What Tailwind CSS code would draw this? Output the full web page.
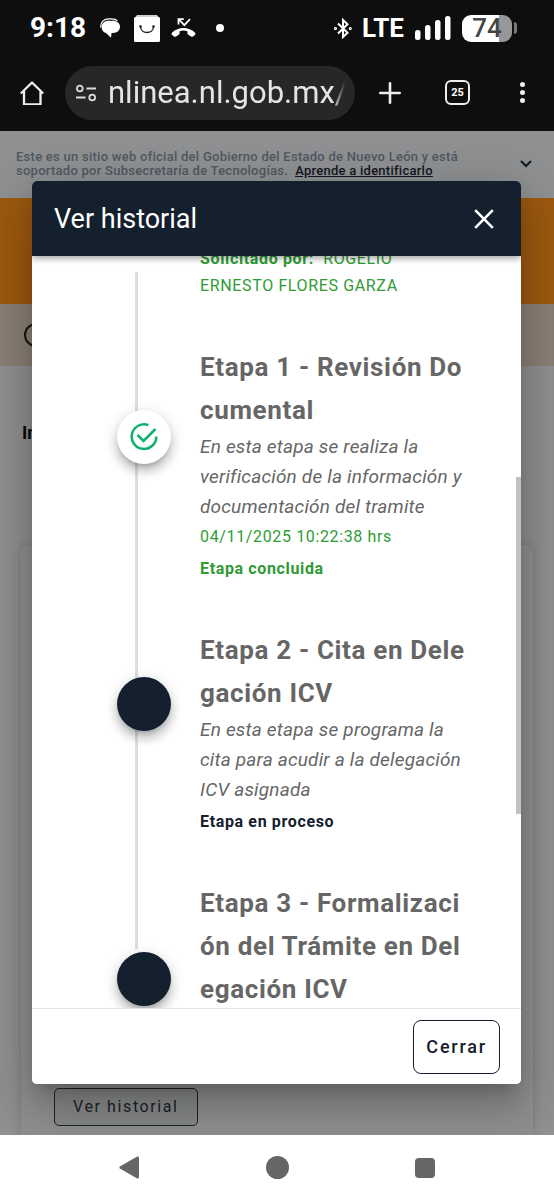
<!DOCTYPE html>
<html lang="es">
<head>
<meta charset="utf-8">
<meta name="viewport" content="width=device-width, initial-scale=1">
<title>Ver historial</title>
<script src="https://cdn.jsdelivr.net/npm/@tailwindcss/browser@4"></script>
</head>
<body class="flex min-h-screen flex-col bg-white font-['Roboto',sans-serif]">

<header class="bg-[#0e0e0e] text-white">
  <div class="flex h-14 items-center justify-between pr-[37px] pl-[30px]">
    <div class="flex items-center">
      <span class="w-[56px] text-[28px] leading-8 font-bold">9:18</span>
      <svg class="ml-3.5 h-5 w-5" viewBox="0 0 20 20" fill="#fff" aria-hidden="true"><path d="M.8 9.500C.2 4 4 .8 9 .8h2c3 0 5 .6 6.500 2" fill="none" stroke="#fff" stroke-width="1.200"/><path d="M8.500 2.800h4.300c4.200 0 7.200 2.500 7.200 6 0 3.700-3 6.200-7 6.200h-1.500L11 19.800 6 15C3 14.300 1.600 11.800 1.600 9c0-3.700 3-6.200 6.900-6.200z"/></svg>
      <svg class="ml-3.5 h-[27px] w-[26px]" viewBox="0 0 26 27" aria-hidden="true"><path d="M3 0h20l3 4H0z" fill="#d8cfcf"/><rect y="2" width="26" height="25" rx="1.500" fill="#fff"/><path d="M6.500 11.500c0 8 13 8 13 0" fill="none" stroke="#222" stroke-width="1.400"/><circle cx="6.500" cy="11.500" r="1.300" fill="#222"/><circle cx="19.500" cy="11.500" r="1.300" fill="#222"/></svg>
      <svg class="ml-[11px] h-5 w-[25px]" viewBox="0 0 25 20" aria-hidden="true"><path d="M1.200 14.500C7 8.500 18 8.500 23.800 14.500c.9 1 .9 1.700 0 2.500l-1.700 1.400c-.7.500-1.400.5-2.100 0l-2.700-1.700c-.7-.5-.9-1-.9-1.700v-1.800c-2.700-.9-5-.9-7.800 0V15c0 .7-.3 1.200-.9 1.700L5 18.400c-.7.500-1.400.5-2.100 0L1.200 17c-.9-.8-.9-1.500 0-2.500z" fill="#fff"/><path d="M7.500 6.500V1.200h5.300M8 1.500l5.300 5.700L19 1.200" fill="none" stroke="#fff" stroke-width="1.800"/></svg>
      <span class="ml-5 size-2 rounded-full bg-white"></span>
    </div>
    <div class="flex items-center">
      <svg class="h-[21px] w-[18px]" viewBox="0 0 18 21" fill="none" stroke="#fff" stroke-width="2" aria-hidden="true"><path d="M4 5.500l9.500 9.300L9 19V2l4.500 4.200L4 15.500"/><circle cx="1.500" cy="10.500" r=".6"/><circle cx="16.300" cy="10.500" r=".6"/></svg>
      <span class="ml-2.5 text-[26px] leading-8 font-bold">LTE</span>
      <svg class="ml-[11px] h-6 w-[36px]" viewBox="0 0 36 24" fill="#fff" aria-hidden="true"><rect x="0" y="14" width="5.500" height="10" rx="2.500"/><rect x="10" y="9" width="5.500" height="15" rx="2.500"/><rect x="20" y="4" width="5.500" height="20" rx="2.500"/><rect x="30" y="0" width="5.500" height="24" rx="2.500"/></svg>
      <div class="ml-[11px] flex h-[27px] w-[50px] items-center justify-center rounded-[9px] bg-linear-to-r from-white from-75% to-[#979797] to-75% text-[26px] leading-none font-medium text-[#444]">74</div>
      <span class="ml-0.5 h-3 w-[3px] rounded-r bg-[#777]"></span>
    </div>
  </div>
  <div class="flex h-[75px] items-center pr-7 pl-5 pb-0.5">
    <button aria-label="Inicio" class="w-[45px]"><svg class="size-6" viewBox="0 0 24 24" fill="none" stroke="#eee" stroke-width="2.300" stroke-linejoin="round" aria-hidden="true"><path d="M.8 12.500L12 1.500l11.200 11M4 10v13.500h16.500V10"/></svg></button>
    <div class="flex h-[54px] min-w-0 flex-1 items-center overflow-hidden rounded-full bg-[#262729] pr-2.5 pl-[11px]">
      <svg class="h-[18px] w-5 shrink-0" viewBox="0 0 20 18" fill="none" stroke="#ddd" stroke-width="1.800" aria-hidden="true"><circle cx="3.800" cy="4.500" r="2.900"/><path d="M10.500 4.500H20M0 13.500h9.500"/><circle cx="16.200" cy="13.500" r="2.900"/></svg>
      <input aria-label="Dirección" value="nlinea.nl.gob.mx/" readonly class="ml-3 w-full min-w-0 bg-transparent mask-r-from-95% text-[31px] leading-10 text-[#e4e4e6] outline-none">
    </div>
    <button aria-label="Nueva pestaña" class="ml-6 shrink-0"><svg class="size-[22px]" viewBox="0 0 22 22" stroke="#eee" stroke-width="2.600" stroke-linecap="round" aria-hidden="true"><path d="M11 1.300v19.400M1.300 11h19.400"/></svg></button>
    <button aria-label="Pestañas" class="ml-11 flex size-[25px] shrink-0 items-center justify-center rounded-[6px] border-2 border-[#eee] text-[11px] leading-none font-bold">25</button>
    <button aria-label="Menú" class="ml-12 flex w-2 shrink-0 flex-col items-center gap-[3px]"><i class="size-[5px] rounded-full bg-[#eee]"></i><i class="size-[5px] rounded-full bg-[#eee]"></i><i class="size-[5px] rounded-full bg-[#eee]"></i></button>
  </div>
</header>

<main class="relative flex flex-1 flex-col overflow-hidden bg-[#8f8f8f]">
  <div class="flex h-[67px] items-start justify-between bg-[#8f9092] px-4 pt-[19px]">
    <p class="text-[13px] leading-[14px] font-medium tracking-[0.02em] text-[#515761]">Este es un sitio web oficial del Gobierno del Estado de Nuevo León y está<br>soportado por Subsecretaría de Tecnologías. &nbsp;<a href="#" class="text-[#14181e] underline">Aprende a identificarlo</a></p>
    <button aria-label="Desplegar" class="mt-2.5 mr-1.5 shrink-0"><svg class="h-2 w-3" viewBox="0 0 12 8" fill="none" stroke="#14181e" stroke-width="2" aria-hidden="true"><path d="M1 1l5 5 5-5"/></svg></button>
  </div>
  <div class="h-[106px] bg-[#9d5910]"></div>
  <div class="flex h-[62px] items-center bg-[#8a7f74] px-6"><span class="size-6 rounded-full border-2 border-[#161616]"></span></div>
  <h2 class="mt-[55px] px-[22px] text-lg leading-6 font-bold text-[#080808]">Información</h2>
  <div class="mx-[21px] mt-[100px] flex flex-1 items-end rounded-t-lg bg-[#8f8f8f] px-[33px] pb-[9px] shadow-[0_0_8px_rgba(0,0,0,0.15)]">
    <button class="h-[38px] rounded-[5px] border border-[#1b2129] bg-[#868887] px-[18px] text-base tracking-widest text-[#1b2129]">Ver historial</button>
  </div>

  <section role="dialog" aria-label="Ver historial" class="absolute top-[50px] right-[33px] bottom-[51px] left-8 flex flex-col overflow-hidden rounded-[5px] bg-white shadow-[0_11px_15px_-7px_rgba(0,0,0,0.2),0_24px_38px_3px_rgba(0,0,0,0.14),0_9px_46px_8px_rgba(0,0,0,0.12)]">
    <div class="z-10 flex h-[75px] shrink-0 items-center justify-between bg-[#14202e] pr-[27px] pl-[22px] text-white shadow-[0_2px_7px_rgba(0,0,0,0.4)]">
      <h1 class="text-[27px] leading-8">Ver historial</h1>
      <button aria-label="Cerrar ventana"><svg class="size-5" viewBox="0 0 20 20" stroke="#fff" stroke-width="2.600" aria-hidden="true"><path d="M1.200 1.200l17.600 17.600M18.800 1.200L1.200 18.800"/></svg></button>
    </div>

    <div class="relative min-h-0 flex-1 overflow-hidden pr-[50px] pl-[85px]">
      <div class="absolute top-4 bottom-[59px] left-[103px] w-[3px] bg-[#dedede]"></div>
      <div class="absolute top-[221px] right-0 h-[337px] w-[5px] bg-[#c1c1c1]"></div>
      <p class="-mt-[11px] pl-[83px] text-base leading-[27px] tracking-[0.04em] text-[#2e9b35]"><strong class="font-bold">Solicitado por:</strong> &nbsp;ROGELIO<br>ERNESTO FLORES GARZA</p>
      <ol class="relative mt-[47px] flex flex-col gap-11">
        <li class="flex gap-[29px]">
          <span class="mt-16 flex size-[54px] shrink-0 items-center justify-center rounded-full bg-white shadow-[0_5px_5px_-3px_rgba(0,0,0,0.2),0_8px_10px_1px_rgba(0,0,0,0.14),0_3px_14px_2px_rgba(0,0,0,0.12)]">
            <svg class="size-7" viewBox="0 0 28 28" fill="none" stroke="#0fb070" stroke-width="2.500" aria-hidden="true"><path d="M18.300 2.100A12.300 12.300 0 1 0 26.300 13.500"/><path d="M7.500 12l6 6L25.500 6"/></svg>
          </span>
          <div class="min-w-0 flex-1">
            <h3 class="text-[26px] leading-[43px] font-bold tracking-wide break-all text-[#666]">Etapa 1 - Revisión Documental</h3>
            <p class="text-[19px] leading-[30px] tracking-[0.01em] text-[#666] italic">En esta etapa se realiza la verificación de la información y documentación del tramite</p>
            <p class="text-base leading-[30px] tracking-[0.04em] text-[#2e9b35]">04/11/2025 10:22:38 hrs</p>
            <p class="text-base leading-[33px] font-bold tracking-[0.04em] text-[#2e9b35]">Etapa concluida</p>
          </div>
        </li>
        <li class="flex gap-[29px]">
          <span class="mt-12 size-[54px] shrink-0 rounded-full bg-[#14202e] shadow-[0_5px_5px_-3px_rgba(0,0,0,0.2),0_8px_10px_1px_rgba(0,0,0,0.14),0_3px_14px_2px_rgba(0,0,0,0.12)]"></span>
          <div class="min-w-0 flex-1">
            <h3 class="text-[26px] leading-[43px] font-bold tracking-wide break-all text-[#666]">Etapa 2 - Cita en Delegación ICV</h3>
            <p class="text-[19px] leading-[30px] tracking-[0.01em] text-[#666] italic">En esta etapa se programa la cita para acudir a la delegación ICV asignada</p>
            <p class="text-base leading-[33px] font-bold tracking-[0.04em] text-[#14202e]">Etapa en proceso</p>
          </div>
        </li>
        <li class="flex gap-[29px]">
          <span class="mt-[70px] size-[54px] shrink-0 rounded-full bg-[#14202e] shadow-[0_5px_5px_-3px_rgba(0,0,0,0.2),0_8px_10px_1px_rgba(0,0,0,0.14),0_3px_14px_2px_rgba(0,0,0,0.12)]"></span>
          <div class="min-w-0 flex-1">
            <h3 class="text-[26px] leading-[43px] font-bold tracking-wide break-all text-[#666]">Etapa 3 - Formalización del Trámite en Delegación ICV</h3>
          </div>
        </li>
      </ol>
    </div>

    <div class="z-10 flex h-[76px] shrink-0 items-center justify-end border-t border-[#e2e2e2] bg-white pr-[21px]">
      <button class="h-[54px] rounded-lg border border-[#14202e] px-3 text-lg font-medium tracking-widest text-[#14202e]">Cerrar</button>
    </div>
  </section>
</main>

<nav aria-label="Sistema" class="flex h-[65px] shrink-0 items-center justify-between bg-white px-[119px]">
  <button aria-label="Atrás"><svg class="h-[23px] w-5" viewBox="0 0 20 23" aria-hidden="true"><path d="M2 11.500L18.500 2v19z" fill="#666" stroke="#666" stroke-width="3" stroke-linejoin="round"/></svg></button>
  <button aria-label="Inicio" class="size-[23px] rounded-full bg-[#666]"></button>
  <button aria-label="Recientes" class="size-5 rounded-sm bg-[#666]"></button>
</nav>
</body>
</html>
